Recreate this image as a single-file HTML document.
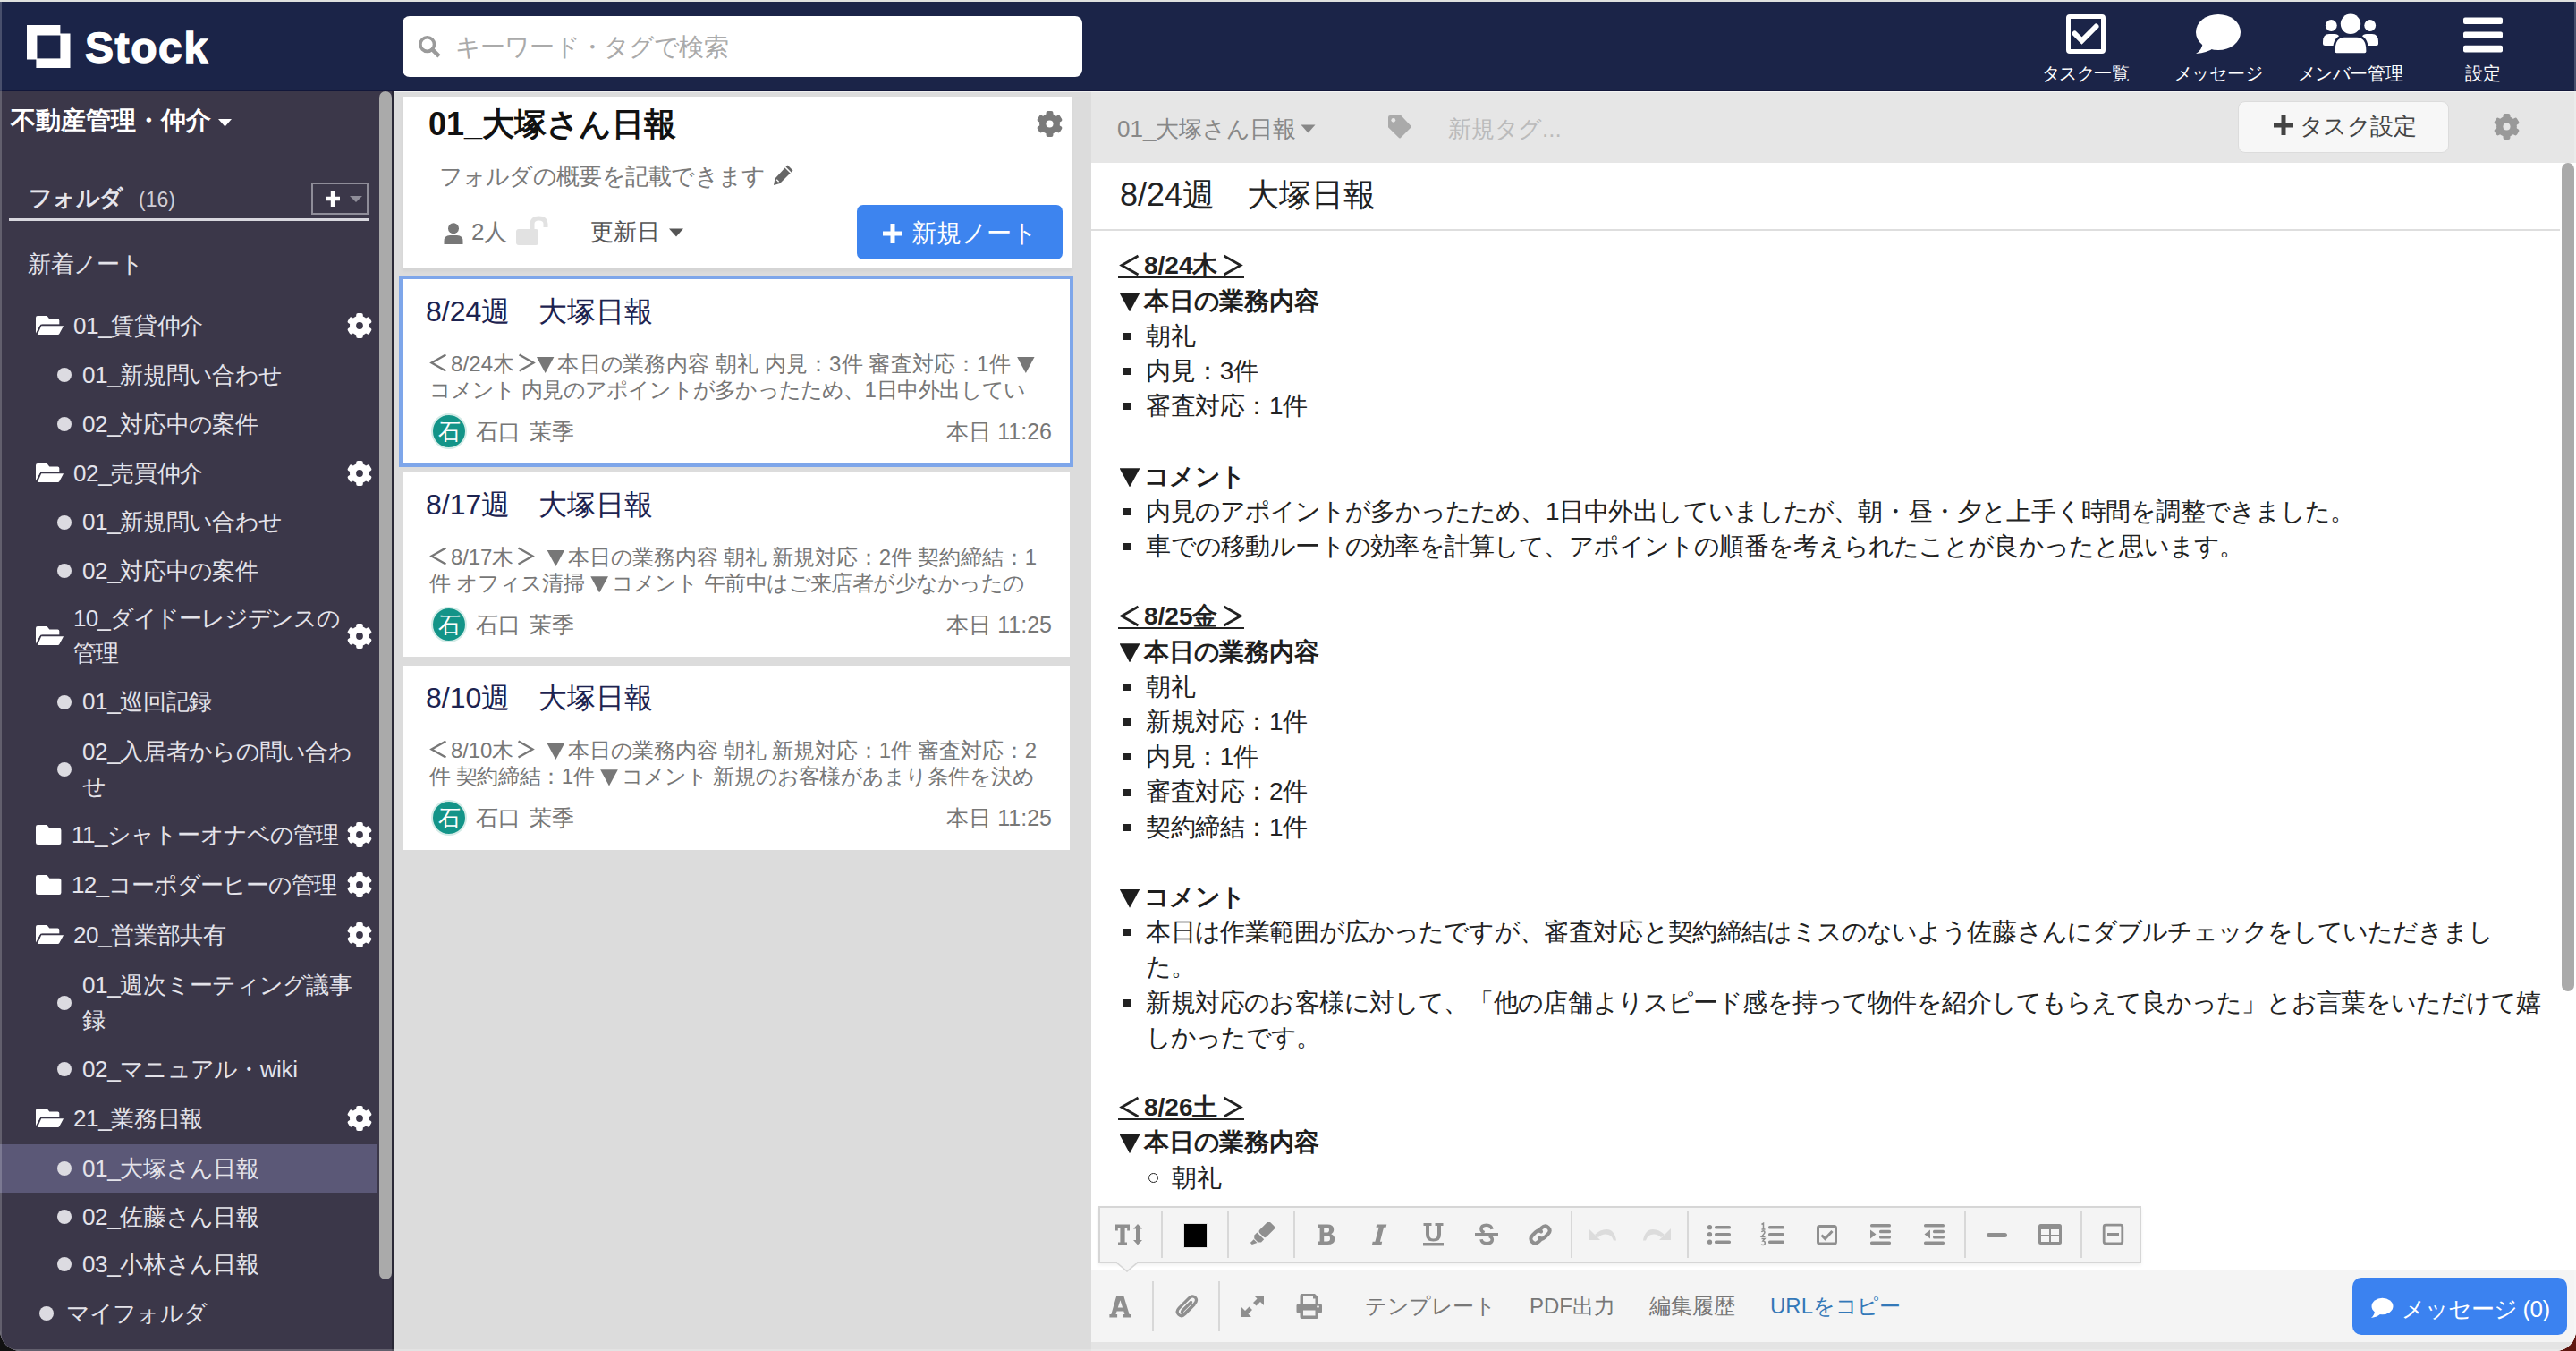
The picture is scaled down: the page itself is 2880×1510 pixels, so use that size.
<!DOCTYPE html>
<html><head><meta charset="utf-8">
<style>
*{box-sizing:border-box;margin:0;padding:0}
html,body{width:2880px;height:1510px;overflow:hidden;background:#111}
body{font-family:"Liberation Sans",sans-serif;position:relative}
.a{position:absolute;letter-spacing:var(--ls,0px)}
.nw{white-space:nowrap}
#win{position:absolute;left:0;top:0;width:2880px;height:1510px;background:#e6e6e6;border-radius:0 0 23px 23px;overflow:hidden}
#hdr{left:0;top:0;width:2880px;height:102px;background:#1b2448}
#side{left:0;top:102px;width:438px;height:1408px;background:#3b3749}
#sep{left:438px;top:102px;width:2px;height:1408px;background:#2a2836}
#mid{left:440px;top:102px;width:780px;height:1408px;background:#dcdcdc}
.tri{display:inline-block;width:1em;height:0.76em;vertical-align:-0.1em;position:relative}
.tri:before{content:"";position:absolute;left:0.02em;top:0;width:0.82em;height:100%;background:currentColor;clip-path:polygon(0 0,100% 0,50% 100%)}
.ang{display:inline-block;width:1em;height:1em;vertical-align:-0.16em;overflow:visible}
.k{letter-spacing:calc(var(--ls,0px) - 0.02em)}
.si{font-size:26px;line-height:39px;color:#e4e3ea;--ls:-0.35px}
#ed{left:1220px;top:102px;width:1660px;height:1408px;background:#fff}
</style></head><body>
<div class="a" style="left:2840px;top:1470px;width:40px;height:40px;background:#5e1710"></div>
<div id="win">
<svg width="0" height="0" style="position:absolute">
<defs>
<symbol id="fopen" viewBox="0 0 32 22"><path fill="#fff" d="M0 2Q0 0 2 0H12.5L15.3 3.5H24.5Q26.3 3.5 26.3 5.3V9.6H7.3Q5.3 9.6 4.3 11.4L0 19.5Z"/><path fill="#fff" stroke="#3b3749" stroke-width="1.4" d="M5.8 10.5H32.2L27 20.4Q26.4 21.8 24.8 21.8H2.6Q0.6 21.8 1.4 20.2Z"/></symbol>
<symbol id="fclosed" viewBox="0 0 29 22"><path fill="#fff" d="M0 2.2Q0 0 2.2 0H12.4L15.4 3.8H26.2Q28.4 3.8 28.4 6V19.8Q28.4 22 26.2 22H2.2Q0 22 0 19.8Z"/></symbol>
<symbol id="gear" viewBox="-14 -14 28 28"><g fill="currentColor"><circle r="11"/><rect x="-3.8" y="-14" width="7.6" height="28" rx="2"/><rect x="-3.8" y="-14" width="7.6" height="28" rx="2" transform="rotate(60)"/><rect x="-3.8" y="-14" width="7.6" height="28" rx="2" transform="rotate(120)"/></g><circle r="3.9" fill="var(--hole)"/></symbol>
<symbol id="fa-user" viewBox="0 0 22 24"><circle cx="11" cy="6.3" r="6" fill="currentColor"/><path d="M0.5 24V20.5Q0.5 14 7 14H15Q21.5 14 21.5 20.5V24Z" fill="currentColor"/></symbol>
<symbol id="fa-caret" viewBox="0 0 16 10"><path d="M0 0.5H16L8 9.5Z" fill="currentColor"/></symbol>
<symbol id="fa-tag" viewBox="0 0 28 28"><path d="M1 4Q1 2 3 2H15.3L26.2 13.6Q27.2 14.7 26.2 15.8L15 26.9Q13.8 28 12.7 26.8L1 15.3Z" fill="currentColor"/><circle cx="6.8" cy="7.3" r="2.4" fill="#e6e6e6"/></symbol>
</defs></svg>

<div id="hdr" class="a"></div>
<svg class="a" style="left:30px;top:28px" width="50" height="50" viewBox="0 0 50 50"><path fill="#fff" d="M0 0H37.4V38.4H0Z M10.4 9.5H48.5V48H10.4Z"/><rect x="11.4" y="11.5" width="26" height="25.9" fill="#1b2448"/></svg>
<div class="a nw" style="left:95px;top:26px;font-size:48px;line-height:56px;font-weight:bold;color:#fff;--ls:1.6px;-webkit-text-stroke:1.4px #fff">Stock</div>
<div class="a" style="left:450px;top:18px;width:760px;height:68px;background:#fff;border-radius:8px"></div>
<svg class="a" style="left:467px;top:39px" width="26" height="26" viewBox="0 0 26 26"><circle cx="10.7" cy="10.6" r="7.8" fill="none" stroke="#9a9a9a" stroke-width="3.6"/><path d="M16.5 16.5L22.3 22.3" stroke="#9a9a9a" stroke-width="4.6" stroke-linecap="square"/></svg>
<div class="a nw" style="left:509px;top:35px;font-size:27.5px;line-height:36px;color:#aaa;--ls:-0.5px"><span class="k">キ</span>ー<span class="k">ワ</span>ー<span class="k">ド</span>・<span class="k">タグで</span>検索</div>
<!-- right icons -->
<svg class="a" style="left:2308px;top:14px" width="48" height="48" viewBox="0 0 48 48"><path fill="#fff" fill-rule="evenodd" d="M6 2H42Q46 2 46 6V42Q46 46 42 46H6Q2 46 2 42V6Q2 2 6 2Z M7 7V41H41V7Z"/><path d="M11.5 23.5L19.5 31.5L35.5 15.5" fill="none" stroke="#fff" stroke-width="6" stroke-linecap="round"/></svg>
<div class="a nw" style="left:2232px;top:70px;width:200px;text-align:center;font-size:20px;line-height:24px;color:#fff"><span class="k">タスク</span>一覧</div>
<svg class="a" style="left:2453px;top:12px" width="54" height="52" viewBox="0 0 54 52"><ellipse cx="27" cy="24" rx="25" ry="20" fill="#fff"/><path d="M10 35 Q9 44 2 48 Q15 47 23 41 Z" fill="#fff"/></svg>
<div class="a nw" style="left:2380px;top:70px;width:200px;text-align:center;font-size:20px;line-height:24px;color:#fff"><span class="k">メッセ</span>ー<span class="k">ジ</span></div>
<svg class="a" style="left:2594px;top:14px" width="68" height="48" viewBox="0 0 68 48"><g fill="#fff"><circle cx="12.3" cy="14.5" r="6.4"/><circle cx="55.7" cy="14.5" r="6.4"/><path d="M3 32.5Q3 24 10 24H16Q20 24 21 26.5L17 37H5.5Q3 37 3 34.5Z"/><path d="M65 32.5Q65 24 58 24H52Q48 24 47 26.5L51 37H62.5Q65 37 65 34.5Z"/><circle cx="34" cy="12.8" r="11.2"/></g><path d="M15.3 43Q15.3 26.5 27 26.5H41Q52.7 26.5 52.7 43V43.5Q52.7 46.5 49.7 46.5H18.3Q15.3 46.5 15.3 43.5Z" fill="#fff" stroke="#1b2448" stroke-width="2.6"/></svg>
<div class="a nw" style="left:2528px;top:70px;width:200px;text-align:center;font-size:20px;line-height:24px;color:#fff"><span class="k">メンバ</span>ー管理</div>
<svg class="a" style="left:2752px;top:15px" width="48" height="48" viewBox="0 0 48 48"><rect x="2" y="4.5" width="44" height="7.6" rx="2" fill="#fff"/><rect x="2" y="20.5" width="44" height="7.3" rx="2" fill="#fff"/><rect x="2" y="35.8" width="44" height="7.8" rx="2" fill="#fff"/></svg>
<div class="a nw" style="left:2676px;top:70px;width:200px;text-align:center;font-size:20px;line-height:24px;color:#fff">設定</div>

<div id="side" class="a"></div>
<div id="sep" class="a"></div>
<div class="a" style="left:0;top:1279px;width:422px;height:54px;background:#5b5877"></div>
<div class="a nw" style="left:12px;top:115px;font-size:28px;line-height:40px;font-weight:bold;color:#fff">不動産管理・仲介</div>
<svg class="a" style="left:244px;top:133px" width="15" height="9"><path d="M0 0H15L7.5 8.5Z" fill="#fff"/></svg>
<div class="a nw" style="left:32px;top:201px;font-size:26px;line-height:40px;font-weight:bold;color:#e6e5ec"><span class="k">フォルダ</span></div>
<div class="a nw" style="left:155px;top:203px;font-size:23px;line-height:40px;color:#cfcdd6">(16)</div>
<div class="a" style="left:348px;top:204px;width:64px;height:36px;border:2px solid #8f8d99"></div>
<svg class="a" style="left:360px;top:210px" width="50" height="24"><path d="M12 3V21M4 12H20" stroke="#fff" stroke-width="4.4"/><path d="M31 9H45L38 16Z" fill="#8f8d99"/></svg>
<div class="a" style="left:10px;top:244px;width:402px;height:2.5px;background:#d8d7de"></div>
<div class="a nw si" style="left:31px;top:276.0px">新着<span class="k">ノ</span>ー<span class="k">ト</span></div>
<svg class="a" style="left:40px;top:353px" width="32" height="22"><use href="#fopen"/></svg>
<svg class="a" style="left:388px;top:350px;color:#fff;--hole:#3b3749" width="28" height="28"><use href="#gear"/></svg>
<div class="a nw si" style="left:82px;top:344.5px">01_賃貸仲介</div>
<div class="a" style="left:64px;top:411px;width:16px;height:16px;border-radius:50%;background:#dcdbe1"></div>
<div class="a nw si" style="left:92px;top:399.5px">01_新規問<span class="k">い</span>合<span class="k">わせ</span></div>
<div class="a" style="left:64px;top:466px;width:16px;height:16px;border-radius:50%;background:#dcdbe1"></div>
<div class="a nw si" style="left:92px;top:454.5px">02_対応中<span class="k">の</span>案件</div>
<svg class="a" style="left:40px;top:518px" width="32" height="22"><use href="#fopen"/></svg>
<svg class="a" style="left:388px;top:515px;color:#fff;--hole:#3b3749" width="28" height="28"><use href="#gear"/></svg>
<div class="a nw si" style="left:82px;top:509.5px">02_売買仲介</div>
<div class="a" style="left:64px;top:575.5px;width:16px;height:16px;border-radius:50%;background:#dcdbe1"></div>
<div class="a nw si" style="left:92px;top:564.0px">01_新規問<span class="k">い</span>合<span class="k">わせ</span></div>
<div class="a" style="left:64px;top:630px;width:16px;height:16px;border-radius:50%;background:#dcdbe1"></div>
<div class="a nw si" style="left:92px;top:618.5px">02_対応中<span class="k">の</span>案件</div>
<svg class="a" style="left:40px;top:699.5px" width="32" height="22"><use href="#fopen"/></svg>
<svg class="a" style="left:388px;top:696.5px;color:#fff;--hole:#3b3749" width="28" height="28"><use href="#gear"/></svg>
<div class="a nw si" style="left:82px;top:671.5px;--ls:-0.8px">10_<span class="k">ダイド</span>ー<span class="k">レジデンスの</span><br>管理</div>
<div class="a" style="left:64px;top:776.5px;width:16px;height:16px;border-radius:50%;background:#dcdbe1"></div>
<div class="a nw si" style="left:92px;top:765.0px">01_巡回記録</div>
<div class="a" style="left:64px;top:852px;width:16px;height:16px;border-radius:50%;background:#dcdbe1"></div>
<div class="a nw si" style="left:92px;top:821.0px">02_入居者<span class="k">からの</span>問<span class="k">い</span>合<span class="k">わ</span><br><span class="k">せ</span></div>
<svg class="a" style="left:40px;top:922px" width="29" height="22"><use href="#fclosed"/></svg>
<svg class="a" style="left:388px;top:919px;color:#fff;--hole:#3b3749" width="28" height="28"><use href="#gear"/></svg>
<div class="a nw si" style="left:80px;top:913.5px;--ls:-0.45px">11_<span class="k">シャト</span>ー<span class="k">オナベの</span>管理</div>
<svg class="a" style="left:40px;top:978px" width="29" height="22"><use href="#fclosed"/></svg>
<svg class="a" style="left:388px;top:975px;color:#fff;--hole:#3b3749" width="28" height="28"><use href="#gear"/></svg>
<div class="a nw si" style="left:80px;top:969.5px;--ls:-0.75px">12_<span class="k">コ</span>ー<span class="k">ポダ</span>ー<span class="k">ヒ</span>ー<span class="k">の</span>管理</div>
<svg class="a" style="left:40px;top:1034px" width="32" height="22"><use href="#fopen"/></svg>
<svg class="a" style="left:388px;top:1031px;color:#fff;--hole:#3b3749" width="28" height="28"><use href="#gear"/></svg>
<div class="a nw si" style="left:82px;top:1025.5px">20_営業部共有</div>
<div class="a" style="left:64px;top:1113px;width:16px;height:16px;border-radius:50%;background:#dcdbe1"></div>
<div class="a nw si" style="left:92px;top:1082.0px">01_週次<span class="k">ミ</span>ー<span class="k">ティング</span>議事<br>録</div>
<div class="a" style="left:64px;top:1187px;width:16px;height:16px;border-radius:50%;background:#dcdbe1"></div>
<div class="a nw si" style="left:92px;top:1175.5px">02_<span class="k">マニュアル</span>・wiki</div>
<svg class="a" style="left:40px;top:1239px" width="32" height="22"><use href="#fopen"/></svg>
<svg class="a" style="left:388px;top:1236px;color:#fff;--hole:#3b3749" width="28" height="28"><use href="#gear"/></svg>
<div class="a nw si" style="left:82px;top:1230.5px">21_業務日報</div>
<div class="a" style="left:64px;top:1298px;width:16px;height:16px;border-radius:50%;background:#dcdbe1"></div>
<div class="a nw si" style="left:92px;top:1286.5px">01_大塚<span class="k">さん</span>日報</div>
<div class="a" style="left:64px;top:1352px;width:16px;height:16px;border-radius:50%;background:#dcdbe1"></div>
<div class="a nw si" style="left:92px;top:1340.5px">02_佐藤<span class="k">さん</span>日報</div>
<div class="a" style="left:64px;top:1405px;width:16px;height:16px;border-radius:50%;background:#dcdbe1"></div>
<div class="a nw si" style="left:92px;top:1393.5px">03_小林<span class="k">さん</span>日報</div>
<div class="a" style="left:44px;top:1460px;width:16px;height:16px;border-radius:50%;background:#dcdbe1"></div>
<div class="a nw si" style="left:74px;top:1448.5px"><span class="k">マイフォルダ</span></div>
<div class="a" style="left:424px;top:102px;width:14px;height:1328px;border-radius:7px;background:#aaa"></div>
<div id="mid" class="a"></div>
<div id="ed" class="a"></div>
<div class="a" style="left:1220px;top:102px;width:1660px;height:80px;background:#e6e6e6"></div>
<div class="a nw" style="left:1249px;top:124px;font-size:26px;line-height:40px;color:#888">01_大塚<span class="k">さん</span>日報</div>
<svg class="a" style="left:1454px;top:139px;color:#888" width="17" height="10"><use href="#fa-caret"/></svg>
<svg class="a" style="left:1551px;top:127px;color:#aaa" width="28" height="28"><use href="#fa-tag"/></svg>
<div class="a nw" style="left:1619px;top:124px;font-size:26px;line-height:40px;color:#bbb">新規<span class="k">タグ</span>...</div>
<div class="a" style="left:2502px;top:113px;width:236px;height:58px;background:#f7f7f7;border:1px solid #dcdcdc;border-radius:8px"></div>
<svg class="a" style="left:2541px;top:128px" width="24" height="24"><path d="M12 1V23M1 12H23" stroke="#444" stroke-width="5"/></svg>
<div class="a nw" style="left:2571px;top:121px;font-size:26px;line-height:40px;color:#444"><span class="k">タスク</span>設定</div>
<svg class="a" style="left:2788px;top:127px;color:#999;--hole:#e6e6e6" width="29" height="29"><use href="#gear"/></svg>
<div class="a nw" style="left:1252px;top:194px;font-size:36px;line-height:48px;color:#222">8/24週　大塚日報</div>
<div class="a" style="left:1220px;top:256px;width:1642px;height:2px;background:#dedede"></div>
<div class="a" style="left:2864px;top:182px;width:14px;height:926px;border-radius:7px;background:#aaa"></div>
<div class="a" style="left:1250px;top:309.0px;width:141px;height:2.4px;background:#222"></div><div class="a nw" style="left:1251px;top:277.4px;font-size:28px;line-height:39.2px;font-weight:bold;color:#222"><svg class="ang" viewBox="0 0 28 28"><path d="M21.5 3L3 13.5L21.5 24" fill="none" stroke="currentColor" stroke-width="2.8"/></svg>8/24木<svg class="ang" viewBox="0 0 28 28"><path d="M6.5 3L25 13.5L6.5 24" fill="none" stroke="currentColor" stroke-width="2.8"/></svg></div>
<div class="a nw" style="left:1251px;top:316.6px;font-size:28px;line-height:39.2px;font-weight:bold;color:#1e1e1e"><i class="tri"></i>本日<span class="k">の</span>業務内容</div>
<div class="a" style="left:1255px;top:371.9px;width:8.8px;height:8.2px;background:#222"></div>
<div class="a nw" style="left:1281px;top:355.8px;font-size:28px;line-height:39.2px;color:#222;--ls:-0.4px">朝礼</div>
<div class="a" style="left:1255px;top:411.1px;width:8.8px;height:8.2px;background:#222"></div>
<div class="a nw" style="left:1281px;top:395.0px;font-size:28px;line-height:39.2px;color:#222;--ls:-0.4px">内見：3件</div>
<div class="a" style="left:1255px;top:450.3px;width:8.8px;height:8.2px;background:#222"></div>
<div class="a nw" style="left:1281px;top:434.2px;font-size:28px;line-height:39.2px;color:#222;--ls:-0.4px">審査対応：1件</div>
<div class="a nw" style="left:1251px;top:512.6px;font-size:28px;line-height:39.2px;font-weight:bold;color:#1e1e1e"><i class="tri"></i><span class="k">コメント</span></div>
<div class="a" style="left:1255px;top:567.9px;width:8.8px;height:8.2px;background:#222"></div>
<div class="a nw" style="left:1281px;top:551.8px;font-size:28px;line-height:39.2px;color:#222;--ls:-0.4px">内見<span class="k">のアポイントが</span>多<span class="k">かったため</span>、1日中外出<span class="k">していましたが</span>、朝・昼・夕<span class="k">と</span>上手<span class="k">く</span>時間<span class="k">を</span>調整<span class="k">できました</span>。</div>
<div class="a" style="left:1255px;top:607.1px;width:8.8px;height:8.2px;background:#222"></div>
<div class="a nw" style="left:1281px;top:591.0px;font-size:28px;line-height:39.2px;color:#222;--ls:-0.4px">車<span class="k">での</span>移動<span class="k">ル</span>ー<span class="k">トの</span>効率<span class="k">を</span>計算<span class="k">して</span>、<span class="k">アポイントの</span>順番<span class="k">を</span>考<span class="k">えられたことが</span>良<span class="k">かったと</span>思<span class="k">います</span>。</div>
<div class="a" style="left:1250px;top:701.0px;width:141px;height:2.4px;background:#222"></div><div class="a nw" style="left:1251px;top:669.4px;font-size:28px;line-height:39.2px;font-weight:bold;color:#222"><svg class="ang" viewBox="0 0 28 28"><path d="M21.5 3L3 13.5L21.5 24" fill="none" stroke="currentColor" stroke-width="2.8"/></svg>8/25金<svg class="ang" viewBox="0 0 28 28"><path d="M6.5 3L25 13.5L6.5 24" fill="none" stroke="currentColor" stroke-width="2.8"/></svg></div>
<div class="a nw" style="left:1251px;top:708.6px;font-size:28px;line-height:39.2px;font-weight:bold;color:#1e1e1e"><i class="tri"></i>本日<span class="k">の</span>業務内容</div>
<div class="a" style="left:1255px;top:763.9px;width:8.8px;height:8.2px;background:#222"></div>
<div class="a nw" style="left:1281px;top:747.8px;font-size:28px;line-height:39.2px;color:#222;--ls:-0.4px">朝礼</div>
<div class="a" style="left:1255px;top:803.1px;width:8.8px;height:8.2px;background:#222"></div>
<div class="a nw" style="left:1281px;top:787.0px;font-size:28px;line-height:39.2px;color:#222;--ls:-0.4px">新規対応：1件</div>
<div class="a" style="left:1255px;top:842.3px;width:8.8px;height:8.2px;background:#222"></div>
<div class="a nw" style="left:1281px;top:826.2px;font-size:28px;line-height:39.2px;color:#222;--ls:-0.4px">内見：1件</div>
<div class="a" style="left:1255px;top:881.5px;width:8.8px;height:8.2px;background:#222"></div>
<div class="a nw" style="left:1281px;top:865.4px;font-size:28px;line-height:39.2px;color:#222;--ls:-0.4px">審査対応：2件</div>
<div class="a" style="left:1255px;top:920.7px;width:8.8px;height:8.2px;background:#222"></div>
<div class="a nw" style="left:1281px;top:904.6px;font-size:28px;line-height:39.2px;color:#222;--ls:-0.4px">契約締結：1件</div>
<div class="a nw" style="left:1251px;top:983.0px;font-size:28px;line-height:39.2px;font-weight:bold;color:#1e1e1e"><i class="tri"></i><span class="k">コメント</span></div>
<div class="a" style="left:1255px;top:1038.3px;width:8.8px;height:8.2px;background:#222"></div>
<div class="a nw" style="left:1281px;top:1022.2px;font-size:28px;line-height:39.2px;color:#222;--ls:-0.4px">本日<span class="k">は</span>作業範囲<span class="k">が</span>広<span class="k">かったですが</span>、審査対応<span class="k">と</span>契約締結<span class="k">はミスのないよう</span>佐藤<span class="k">さんにダブルチェックをしていただきまし</span></div>
<div class="a nw" style="left:1281px;top:1061.4px;font-size:28px;line-height:39.2px;color:#222;--ls:-0.4px"><span class="k">た</span>。</div>
<div class="a" style="left:1255px;top:1116.7px;width:8.8px;height:8.2px;background:#222"></div>
<div class="a nw" style="left:1281px;top:1100.6px;font-size:28px;line-height:39.2px;color:#222;--ls:-0.4px">新規対応<span class="k">のお</span>客様<span class="k">に</span>対<span class="k">して</span>、「他<span class="k">の</span>店舗<span class="k">よりスピ</span>ー<span class="k">ド</span>感<span class="k">を</span>持<span class="k">って</span>物件<span class="k">を</span>紹介<span class="k">してもらえて</span>良<span class="k">かった</span>」<span class="k">とお</span>言葉<span class="k">をいただけて</span>嬉</div>
<div class="a nw" style="left:1281px;top:1139.8px;font-size:28px;line-height:39.2px;color:#222;--ls:-0.4px"><span class="k">しかったです</span>。</div>
<div class="a" style="left:1250px;top:1249.8px;width:141px;height:2.4px;background:#222"></div><div class="a nw" style="left:1251px;top:1218.2px;font-size:28px;line-height:39.2px;font-weight:bold;color:#222"><svg class="ang" viewBox="0 0 28 28"><path d="M21.5 3L3 13.5L21.5 24" fill="none" stroke="currentColor" stroke-width="2.8"/></svg>8/26土<svg class="ang" viewBox="0 0 28 28"><path d="M6.5 3L25 13.5L6.5 24" fill="none" stroke="currentColor" stroke-width="2.8"/></svg></div>
<div class="a nw" style="left:1251px;top:1257.4px;font-size:28px;line-height:39.2px;font-weight:bold;color:#1e1e1e"><i class="tri"></i>本日<span class="k">の</span>業務内容</div>
<div class="a" style="left:1284px;top:1310.6999999999998px;width:11px;height:11px;border:1.5px solid #222;border-radius:50%"></div>
<div class="a nw" style="left:1310px;top:1296.6px;font-size:28px;line-height:39.2px;color:#222;--ls:-0.4px">朝礼</div>
<div class="a" style="left:450px;top:108px;width:748px;height:192px;background:#fff;box-shadow:0 3px 4px rgba(0,0,0,0.045)"></div>
<div class="a nw" style="left:479px;top:116px;font-size:36px;line-height:46px;font-weight:bold;color:#111">01_大塚<span class="k">さん</span>日報</div>
<svg class="a" style="left:1159px;top:124px;color:#7a7a7a;--hole:#fff" width="29" height="29"><use href="#gear"/></svg>
<div class="a nw" style="left:491px;top:177px;font-size:26px;line-height:40px;color:#7a7a7a;--ls:-0.35px"><span class="k">フォルダの</span>概要<span class="k">を</span>記載<span class="k">できます</span></div>
<svg class="a" style="left:863px;top:183px" width="26" height="25" viewBox="0 0 26 25"><path d="M17.5 1.5L23.5 7.5L9 22L2 24L3.5 16.5Z" fill="#666"/><path d="M15 4L21 10" stroke="#fff" stroke-width="1.6"/><path d="M5.2 17.8L7.6 20.2" stroke="#fff" stroke-width="1.4"/></svg>
<svg class="a" style="left:496px;top:249px;color:#777" width="22" height="24"><use href="#fa-user"/></svg>
<div class="a nw" style="left:527px;top:239px;font-size:26px;line-height:40px;color:#777">2人</div>
<svg class="a" style="left:577px;top:241px" width="36" height="33" viewBox="0 0 36 33"><rect x="0" y="15" width="25" height="18" rx="3" fill="#e2e2e2"/><path d="M18 15V9Q18 3 25.5 3Q33 3 33 9V13" fill="none" stroke="#e2e2e2" stroke-width="5"/></svg>
<div class="a nw" style="left:660px;top:239px;font-size:26px;line-height:40px;color:#555">更新日</div>
<svg class="a" style="left:748px;top:255px;color:#555" width="16" height="10"><use href="#fa-caret"/></svg>
<div class="a" style="left:958px;top:229px;width:230px;height:61px;background:#3d84ef;border-radius:7px"></div>
<svg class="a" style="left:986px;top:249px" width="24" height="24"><path d="M12 1V23M1 12H23" stroke="#fff" stroke-width="5"/></svg>
<div class="a nw" style="left:1019px;top:240px;font-size:28px;line-height:42px;color:#fff">新規<span class="k">ノ</span>ー<span class="k">ト</span></div>
<div class="a" style="left:446px;top:308px;width:754px;height:214px;background:#fff;border:4px solid #7ea6ea"></div>
<div class="a nw" style="left:476px;top:324px;font-size:32px;line-height:48px;color:#1d2350">8/24週　大塚日報</div>
<div class="a nw" style="left:480px;top:391.5px;font-size:24px;line-height:29.5px;color:#777;--ls:0.13px"><svg class="ang" viewBox="0 0 28 28"><path d="M21.5 3L3 13.5L21.5 24" fill="none" stroke="currentColor" stroke-width="2.8"/></svg>8/24木<svg class="ang" viewBox="0 0 28 28"><path d="M6.5 3L25 13.5L6.5 24" fill="none" stroke="currentColor" stroke-width="2.8"/></svg><i class="tri"></i>本日<span class="k">の</span>業務内容 朝礼 内見：3件 審査対応：1件 <i class="tri"></i></div>
<div class="a nw" style="left:480px;top:421.0px;font-size:24px;line-height:29.5px;color:#777;--ls:-0.4px"><span class="k">コメント</span> 内見<span class="k">のアポイントが</span>多<span class="k">かったため</span>、1日中外出<span class="k">してい</span></div>
<div class="a" style="left:482px;top:462.0px;width:40px;height:40px;border-radius:50%;background:#139488;border:2px solid #d3ebe7"></div>
<div class="a nw" style="left:482px;top:462.0px;width:40px;height:40px;text-align:center;font-size:25px;line-height:40px;color:#fff">石</div>
<div class="a nw" style="left:532px;top:462px;font-size:25px;line-height:40px;color:#777">石口<span style="margin-left:10px">茉季</span></div>
<div class="a nw" style="left:900px;top:462px;width:276px;text-align:right;font-size:25px;line-height:40px;color:#777">本日 11:26</div>
<div class="a" style="left:450px;top:528px;width:746px;height:206px;background:#fff"></div>
<div class="a nw" style="left:476px;top:540px;font-size:32px;line-height:48px;color:#1d2350">8/17週　大塚日報</div>
<div class="a nw" style="left:480px;top:607.5px;font-size:24px;line-height:29.5px;color:#777;--ls:-0.13px"><svg class="ang" viewBox="0 0 28 28"><path d="M21.5 3L3 13.5L21.5 24" fill="none" stroke="currentColor" stroke-width="2.8"/></svg>8/17木<svg class="ang" viewBox="0 0 28 28"><path d="M6.5 3L25 13.5L6.5 24" fill="none" stroke="currentColor" stroke-width="2.8"/></svg><span style="display:inline-block;width:13px"></span><i class="tri"></i>本日<span class="k">の</span>業務内容 朝礼 新規対応：2件 契約締結：1</div>
<div class="a nw" style="left:480px;top:637.0px;font-size:24px;line-height:29.5px;color:#777;--ls:-0.4px">件 <span class="k">オフィス</span>清掃 <i class="tri"></i><span class="k">コメント</span> 午前中<span class="k">はご</span>来店者<span class="k">が</span>少<span class="k">なかったの</span></div>
<div class="a" style="left:482px;top:678.0px;width:40px;height:40px;border-radius:50%;background:#139488;border:2px solid #d3ebe7"></div>
<div class="a nw" style="left:482px;top:678.0px;width:40px;height:40px;text-align:center;font-size:25px;line-height:40px;color:#fff">石</div>
<div class="a nw" style="left:532px;top:678px;font-size:25px;line-height:40px;color:#777">石口<span style="margin-left:10px">茉季</span></div>
<div class="a nw" style="left:900px;top:678px;width:276px;text-align:right;font-size:25px;line-height:40px;color:#777">本日 11:25</div>
<div class="a" style="left:450px;top:744px;width:746px;height:206px;background:#fff"></div>
<div class="a nw" style="left:476px;top:756px;font-size:32px;line-height:48px;color:#1d2350">8/10週　大塚日報</div>
<div class="a nw" style="left:480px;top:823.5px;font-size:24px;line-height:29.5px;color:#777;--ls:-0.13px"><svg class="ang" viewBox="0 0 28 28"><path d="M21.5 3L3 13.5L21.5 24" fill="none" stroke="currentColor" stroke-width="2.8"/></svg>8/10木<svg class="ang" viewBox="0 0 28 28"><path d="M6.5 3L25 13.5L6.5 24" fill="none" stroke="currentColor" stroke-width="2.8"/></svg><span style="display:inline-block;width:13px"></span><i class="tri"></i>本日<span class="k">の</span>業務内容 朝礼 新規対応：1件 審査対応：2</div>
<div class="a nw" style="left:480px;top:853.0px;font-size:24px;line-height:29.5px;color:#777;--ls:-0.4px">件 契約締結：1件 <i class="tri"></i><span class="k">コメント</span> 新規<span class="k">のお</span>客様<span class="k">があまり</span>条件<span class="k">を</span>決<span class="k">め</span></div>
<div class="a" style="left:482px;top:894.0px;width:40px;height:40px;border-radius:50%;background:#139488;border:2px solid #d3ebe7"></div>
<div class="a nw" style="left:482px;top:894.0px;width:40px;height:40px;text-align:center;font-size:25px;line-height:40px;color:#fff">石</div>
<div class="a nw" style="left:532px;top:894px;font-size:25px;line-height:40px;color:#777">石口<span style="margin-left:10px">茉季</span></div>
<div class="a nw" style="left:900px;top:894px;width:276px;text-align:right;font-size:25px;line-height:40px;color:#777">本日 11:25</div>
<div class="a" style="left:1220px;top:1420px;width:1660px;height:80px;background:#f4f4f4"></div>
<div class="a" style="left:1220px;top:1500px;width:1660px;height:10px;background:#e4e4e4"></div>
<div class="a" style="left:1228px;top:1348px;width:1166px;height:64px;background:#f4f4f4;border:2px solid #d6d6d6;box-shadow:0 2px 4px rgba(0,0,0,0.06)"></div>
<svg class="a" style="left:1247px;top:1410px" width="26" height="12"><path d="M0 0L13 11L26 0Z" fill="#f4f4f4"/><path d="M0.5 0.5L13 11L25.5 0.5" fill="none" stroke="#d6d6d6" stroke-width="1.6"/><rect x="2" y="0" width="22" height="1.8" fill="#f4f4f4"/></svg>
<div class="a" style="left:1298px;top:1354px;width:2px;height:52px;background:#d8d8d8"></div>
<div class="a" style="left:1372px;top:1354px;width:2px;height:52px;background:#d8d8d8"></div>
<div class="a" style="left:1445.8px;top:1354px;width:2px;height:52px;background:#d8d8d8"></div>
<div class="a" style="left:1755.6px;top:1354px;width:2px;height:52px;background:#d8d8d8"></div>
<div class="a" style="left:1886px;top:1354px;width:2px;height:52px;background:#d8d8d8"></div>
<div class="a" style="left:2196.3px;top:1354px;width:2px;height:52px;background:#d8d8d8"></div>
<div class="a" style="left:2326.3px;top:1354px;width:2px;height:52px;background:#d8d8d8"></div>
<svg class="a" style="left:1246px;top:1367px" width="32" height="26" viewBox="0 0 32 26"><path fill="#8f8f8f" d="M1 1.5H17V8.5H14.2V6H11.6V21.5H14V24.5H4V21.5H6.4V6H3.8V8.5H1Z"/><path fill="#8f8f8f" d="M21 6.5L26 1L31 6.5H28V19H31L26 24.5L21 19H24V6.5Z"/></svg>
<div class="a" style="left:1322.5px;top:1367px;width:27px;height:27.5px;background:#000;border:1.5px solid #e2e2e2"></div>
<svg class="a" style="left:1395px;top:1366px" width="30" height="28" viewBox="0 0 30 28"><g fill="#8f8f8f" transform="rotate(45 15 14)"><rect x="10" y="-3" width="11" height="17" rx="3"/><path d="M10 15.5H21V20L18.5 22.5H12.5L10 20Z"/><path d="M12.8 23.5H18.2L15.5 29H12.8Z"/></g></svg>
<svg class="a" style="left:1472.5px;top:1368px" width="20" height="24" viewBox="0 0 20 24"><path fill="#8f8f8f" fill-rule="evenodd" d="M0 0.5H11Q18.2 0.5 18.2 6.2Q18.2 9.6 15.2 11.2Q19.2 12.6 19.2 17Q19.2 23 11.2 23H0V19.6H2.6V3.9H0Z M7.2 3.9H10.2Q13 3.9 13 6.7Q13 9.5 10.2 9.5H7.2Z M7.2 13H10.8Q14 13 14 16.3Q14 19.6 10.8 19.6H7.2Z"/></svg>
<svg class="a" style="left:1534px;top:1368px" width="17" height="24" viewBox="0 0 17 24"><path fill="#8f8f8f" d="M5.2 0.5H16.3L15.6 3.8H13.1L8.9 19.7H11.2L10.5 23H0L0.7 19.7H3.4L7.6 3.8H4.5Z"/></svg>
<svg class="a" style="left:1590px;top:1366px" width="25" height="28" viewBox="0 0 25 28"><path fill="#8f8f8f" d="M1.5 1H10.5V4H8V13.5Q8 18.5 12.5 18.5Q17 18.5 17 13.5V4H14.5V1H23.5V4H21V13.5Q21 21.5 12.5 21.5Q4 21.5 4 13.5V4H1.5Z"/><rect x="1" y="23" width="23" height="3.5" fill="#8f8f8f"/></svg>
<svg class="a" style="left:1648px;top:1367px" width="28" height="25" viewBox="0 0 28 25"><path fill="none" stroke="#8f8f8f" stroke-width="3.6" d="M20 6.8Q19 2.2 14 2.2Q8 2.2 8 6.5Q8 9.5 11.5 10.8 M17 14.3Q20.3 15.8 20.3 18.6Q20.3 22.8 14.3 22.8Q8.8 22.8 8 18.3"/><rect x="1" y="11" width="26" height="3" fill="#8f8f8f"/></svg>
<svg class="a" style="left:1708px;top:1366px" width="28" height="28" viewBox="0 0 28 28"><g fill="none" stroke="#8f8f8f" stroke-width="4" stroke-linecap="round"><path d="M12.5 9.5L15.5 6.5Q19.5 2.5 23 6Q26.5 9.5 22.5 13.5L19 17Q15.5 20 13 17.5"/><path d="M15.5 18.5L12.5 21.5Q8.5 25.5 5 22Q1.5 18.5 5.5 14.5L9 11Q12.5 8 15 10.5"/></g></svg>
<svg class="a" style="left:1775px;top:1371px" width="34" height="17" viewBox="0 0 34 17"><path d="M8 9Q14 3 21 3Q30 3 32 15.5H29Q27 8.5 20 8.5Q15 8.5 12 12Z" fill="#dcdcdc"/><path d="M1 2V15H14Z" fill="#dcdcdc"/></svg>
<svg class="a" style="left:1835px;top:1371px" width="34" height="17" viewBox="0 0 34 17"><g transform="translate(34 0) scale(-1 1)"><path d="M8 9Q14 3 21 3Q30 3 32 15.5H29Q27 8.5 20 8.5Q15 8.5 12 12Z" fill="#dcdcdc"/><path d="M1 2V15H14Z" fill="#dcdcdc"/></g></svg>
<svg class="a" style="left:1908px;top:1367px" width="28" height="26" viewBox="0 0 28 26"><g fill="#8f8f8f"><circle cx="3.5" cy="4.7" r="2.6"/><circle cx="3.5" cy="12.7" r="2.6"/><circle cx="3.5" cy="21.2" r="2.6"/><rect x="9" y="3" width="18" height="3.6" rx="1.6"/><rect x="9" y="11" width="18" height="3.6" rx="1.6"/><rect x="9" y="19.4" width="18" height="3.6" rx="1.6"/></g></svg>
<svg class="a" style="left:1967px;top:1366px" width="29" height="28" viewBox="0 0 29 28"><g fill="#8f8f8f"><rect x="10" y="4" width="18" height="3.6" rx="1.6"/><rect x="10" y="12" width="18" height="3.6" rx="1.6"/><rect x="10" y="20.4" width="18" height="3.6" rx="1.6"/></g><g fill="none" stroke="#8f8f8f" stroke-width="1.5"><path d="M2.5 2.5L4.5 1.2V8 M2.5 8H6.5"/><path d="M2.5 11Q3 9.8 4.5 9.8Q6 9.8 6 11.3Q6 12.5 2.5 16.2H6.5"/><path d="M2.5 18.6H6L4 21Q6.3 21 6.3 23.2Q6.3 25.5 4.2 25.5Q2.8 25.5 2.3 24.6"/></g></svg>
<svg class="a" style="left:2030px;top:1368px" width="25" height="24" viewBox="0 0 25 24"><rect x="2.5" y="2.5" width="20" height="19.5" rx="2" fill="none" stroke="#8f8f8f" stroke-width="3"/><path d="M6.5 12.5L10.5 16.5L18.5 8" fill="none" stroke="#8f8f8f" stroke-width="3"/></svg>
<svg class="a" style="left:2090px;top:1367px" width="25" height="25" viewBox="0 0 25 25"><g fill="#8f8f8f"><rect x="1" y="1" width="23" height="3.4" rx="1.5"/><rect x="11" y="7.8" width="13" height="3.4" rx="1.5"/><rect x="11" y="14" width="13" height="3.4" rx="1.5"/><rect x="1" y="20.5" width="23" height="3.4" rx="1.5"/><path d="M1 7.5L7.5 12.5L1 17.5Z"/></g></svg>
<svg class="a" style="left:2150px;top:1367px" width="25" height="25" viewBox="0 0 25 25"><g fill="#8f8f8f"><rect x="1" y="1" width="23" height="3.4" rx="1.5"/><rect x="11" y="7.8" width="13" height="3.4" rx="1.5"/><rect x="11" y="14" width="13" height="3.4" rx="1.5"/><rect x="1" y="20.5" width="23" height="3.4" rx="1.5"/><path d="M8 7.5L1.5 12.5L8 17.5Z"/></g></svg>
<div class="a" style="left:2221px;top:1377.5px;width:23px;height:5px;border-radius:2.5px;background:#8f8f8f"></div>
<svg class="a" style="left:2278px;top:1367px" width="28" height="25" viewBox="0 0 28 25"><rect x="1" y="1" width="26" height="23" rx="2.5" fill="#8f8f8f"/><g fill="#f4f4f4"><rect x="4" y="7" width="9" height="6"/><rect x="15" y="7" width="9" height="6"/><rect x="4" y="15" width="9" height="6"/><rect x="15" y="15" width="9" height="6"/></g></svg>
<svg class="a" style="left:2350px;top:1367px" width="25" height="25" viewBox="0 0 25 25"><rect x="2.2" y="2.2" width="20.6" height="20.6" rx="2" fill="none" stroke="#8f8f8f" stroke-width="2.8"/><rect x="6" y="11" width="13" height="3.4" fill="#8f8f8f"/></svg>
<div class="a" style="left:1287.8px;top:1432px;width:2px;height:56px;background:#d8d8d8"></div>
<div class="a" style="left:1362px;top:1432px;width:2px;height:56px;background:#d8d8d8"></div>
<svg class="a" style="left:1240px;top:1447.5px" width="25" height="25" viewBox="0 0 25 25"><path fill="#8f8f8f" fill-rule="evenodd" d="M8.3 0.3H16.2L22.6 20.9H24.6V24.6H15.8V20.9H17.4L16.3 17.5H8.6L7.5 20.9H9.1V24.6H0.4V20.9H2.3Z M9.8 13.6H15.1L12.45 5.2Z"/></svg>
<svg class="a" style="left:1313px;top:1445px" width="27" height="30" viewBox="0 0 27 30"><path d="M18.5 10.5L9.5 19.5Q7.6 21.4 9 22.8Q10.4 24.2 12.3 22.3L22.3 12.3Q26.3 8.3 23.2 5.2Q20.1 2.1 16.1 6.1L5.3 16.9Q1.3 20.9 4.6 24.2Q7.9 27.5 11.9 23.5L22 13.4" fill="none" stroke="#8f8f8f" stroke-width="3.2" stroke-linecap="round" stroke-linejoin="round"/></svg>
<svg class="a" style="left:1387px;top:1447px" width="27" height="26" viewBox="0 0 27 26"><g fill="#8f8f8f"><path d="M15 1H26V12L22 8L17.5 12.5L14 9L18.5 4.5Z"/><path d="M12 25H1V14L5 18L9.5 13.5L13 17L8.5 21.5Z"/></g></svg>
<svg class="a" style="left:1449px;top:1445px" width="30" height="30" viewBox="0 0 30 30"><g fill="#8f8f8f"><path d="M4.5 3Q4.5 1 6.5 1H21L25 5V12H21.5V6.5H19V3.5H8V12H4.5Z"/><rect x="0.5" y="12" width="28.5" height="11" rx="2.5"/><path d="M4.5 19H25V27Q25 29 23 29H6.5Q4.5 29 4.5 27Z"/></g><rect x="8" y="19.5" width="13.5" height="6" fill="#f4f4f4"/><circle cx="24.5" cy="15.5" r="1.3" fill="#f4f4f4"/></svg>
<div class="a nw" style="left:1526px;top:1440px;font-size:24px;line-height:40px;color:#777"><span class="k">テンプレ</span>ー<span class="k">ト</span></div>
<div class="a nw" style="left:1710px;top:1440px;font-size:24px;line-height:40px;color:#777">PDF出力</div>
<div class="a nw" style="left:1844px;top:1440px;font-size:24px;line-height:40px;color:#777">編集履歴</div>
<div class="a nw" style="left:1979px;top:1440px;font-size:24px;line-height:40px;color:#3378b8">URL<span class="k">をコピ</span>ー</div>
<div class="a" style="left:2630px;top:1428px;width:240px;height:64px;background:#3b82f0;border-radius:10px"></div>
<svg class="a" style="left:2650px;top:1450px" width="26" height="24" viewBox="0 0 26 24"><ellipse cx="13.5" cy="10" rx="12" ry="9.2" fill="#fff"/><path d="M5 15Q5 19.5 1 23Q8 22 11.5 18.5Z" fill="#fff"/></svg>
<div class="a nw" style="left:2685px;top:1443px;font-size:26px;line-height:40px;color:#fff;--ls:-0.6px"><span class="k">メッセ</span>ー<span class="k">ジ</span> (0)</div>
<div class="a" style="left:0;top:101px;width:2880px;height:1px;background:#12173a"></div>
<div class="a" style="left:440px;top:102px;width:2438px;height:1px;background:rgba(255,255,255,0.55)"></div>
<div class="a" style="left:0;top:0;width:2880px;height:2px;background:#dfe1df"></div>
<div class="a" style="left:0;top:2px;width:2px;height:1508px;background:rgba(255,255,255,0.2);border-bottom-left-radius:23px"></div>
<div class="a" style="left:2878px;top:2px;width:2px;height:1508px;background:rgba(255,255,255,0.2)"></div>
<div class="a" style="left:0;top:1508px;width:2880px;height:2px;background:rgba(255,255,255,0.2)"></div>
<div class="a" style="left:440px;top:102px;width:1px;height:1406px;background:rgba(255,255,255,0.5)"></div>
</div>
</body></html>
